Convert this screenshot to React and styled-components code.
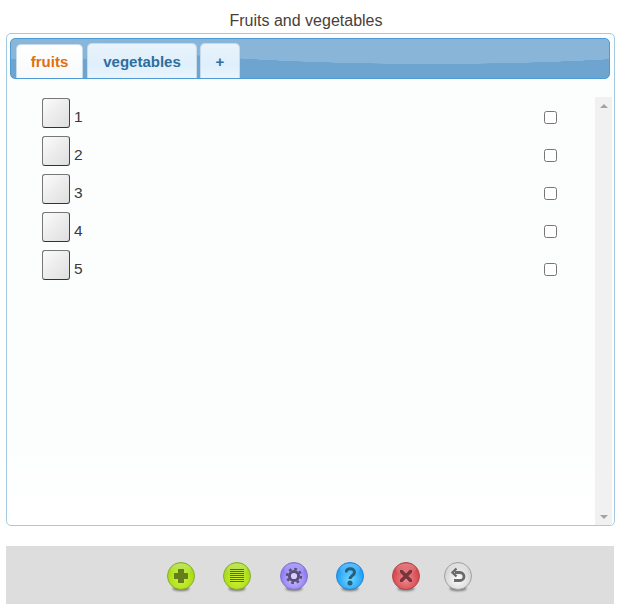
import styled, { createGlobalStyle } from "styled-components";

const GlobalStyle = createGlobalStyle`
  html, body {
    margin: 0;
    background: #fff;
    font-family: "Liberation Sans", Arial, sans-serif;
  }
`;

const Page = styled.div`
  width: 618px;
  height: 609px;
  padding: 12px 4px 0 6px;
  box-sizing: border-box;
  overflow: hidden;
`;

const Title = styled.div`
  height: 21px;
  line-height: 17px;
  font-size: 16px;
  color: #4a4038;
  text-align: center;
  padding-right: 8px;
`;

const Panel = styled.div`
  height: 493px;
  margin-right: -1px;
  box-sizing: border-box;
  border: 1px solid #a6c9e2;
  border-radius: 5px;
  padding: 4px 4px 0 3px;
  background: linear-gradient(#fcfdfd, #fcfefd 85%, #ffffff);
  display: flex;
  flex-direction: column;
`;

const TabBar = styled.div`
  height: 41px;
  box-sizing: border-box;
  border: 1px solid #4d9bd6;
  border-radius: 5px;
  background:
    linear-gradient(#89b6d9, #87b5d8) 0 0 / 100px 20px no-repeat,
    radial-gradient(ellipse 380px 40px at 420px -15px, #88b5d8 99.5%, #6da4d0 100%);
  display: flex;
  align-items: flex-end;
  padding-left: 5px;
`;

const Tab = styled.div`
  height: ${(p) => (p.$active ? 34 : 35)}px;
  width: ${(p) => p.$width}px;
  margin-right: ${(p) => p.$gap}px;
  box-sizing: border-box;
  border-radius: 5px 5px 0 0;
  border: 1px solid #c5dbec;
  border-bottom: 0;
  background: ${(p) =>
    p.$active ? "linear-gradient(#ffffff, #f7f9fa)" : "linear-gradient(#e9f3fb, #dfeffc 60%, #e9f4fd)"};
  color: ${(p) => (p.$active ? "#e17009" : "#2e6e9e")};
  font-size: 15px;
  font-weight: bold;
  display: flex;
  align-items: center;
  justify-content: center;
`;

const Body = styled.div`
  flex: 1;
  display: flex;
  padding-top: 18px;
  margin-right: -2px;
  min-height: 0;
`;

const List = styled.div`
  flex: 1;
  padding-left: 32px;
`;

const Row = styled.div`
  height: 38px;
  display: flex;
  align-items: flex-start;
`;

const ImageButton = styled.div`
  width: 28px;
  height: 30px;
  box-sizing: border-box;
  margin-top: 1px;
  border: 1px solid #777;
  border-right-color: #444;
  border-bottom-color: #333;
  border-radius: 3px;
  background: linear-gradient(135deg, #fbfbfb, #dedede);
`;

const Label = styled.span`
  margin: 11px 0 0 4px;
  font-size: 15.5px;
  line-height: 18px;
  color: #3a3a3a;
  flex: 1;
`;

const Check = styled.input.attrs({ type: "checkbox" })`
  appearance: none;
  width: 13px;
  height: 13px;
  margin: 14px 38px 0 0;
  box-sizing: border-box;
  border: 1px solid #767676;
  border-radius: 2.5px;
  background: #fff;
`;

const Scrollbar = styled.div`
  width: 17px;
  background: #f1f1f1;
  display: flex;
  flex-direction: column;
  justify-content: space-between;
  align-items: center;
  padding: 7px 0 6px;
  box-sizing: border-box;
`;

const Arrow = styled.div`
  width: 0;
  height: 0;
  border-left: 4px solid transparent;
  border-right: 4px solid transparent;
  ${(p) => (p.$down ? "border-top: 4px solid #a3a3a3;" : "border-bottom: 4px solid #a3a3a3;")}
`;

const Toolbar = styled.div`
  height: 58px;
  margin-top: 20px;
  background: #dddddd;
  display: flex;
  align-items: center;
  padding: 3px 0 0 160px;
  box-sizing: border-box;
`;

const IconSlot = styled.div`
  width: 30px;
  height: 32px;
  margin-right: ${(p) => p.$gap}px;
`;

const rows = ["1", "2", "3", "4", "5"];

const icons = [
  {
    id: "add", gap: 26, light: "#d6f232", mid: "#a8dc1c", dark: "#86ac2c",
    glyph: <path d="M12 8.500q0-.5.5-.5h5q.5 0 .5.5V12h3.500q.5 0 .5.5v5q0 .5-.5.5H18v3.500q0 .5-.5.5h-5q-.5 0-.5-.5V18H8.500q-.5 0-.5-.5v-5q0-.5.5-.5H12z" fill="#647f1a" />,
  },
  {
    id: "list", gap: 27, light: "#d6f232", mid: "#a8dc1c", dark: "#86ac2c",
    glyph: (
      <g stroke="#55700f" strokeWidth="1">
        {[8.5, 10.5, 12.5, 14.5, 16.5, 18.5, 20.5].map((y) => (
          <line key={y} x1="8" x2="22" y1={y} y2={y} />
        ))}
      </g>
    ),
  },
  {
    id: "gear", gap: 26, light: "#d0c6ff", mid: "#8e7cf4", dark: "#8478c8",
    glyph: (
      <g fill="none" stroke="#5a5078">
        <circle cx="15" cy="15" r="7" strokeWidth="2.4" strokeDasharray="2.75 2.75" />
        <circle cx="15" cy="15" r="4.6" strokeWidth="3" fill="#dccdff" />
      </g>
    ),
  },
  {
    id: "help", gap: 26, light: "#74d6ff", mid: "#22a2fa", dark: "#2a86d0",
    glyph: (
      <g fill="none" stroke="#20607c" strokeWidth="3">
        <path d="M11 11.500c0-5 8.500-5 8.500-.2 0 3.400-4.500 3.200-4.500 6.700" />
        <circle cx="15" cy="22" r="1" fill="#20607c" />
      </g>
    ),
  },
  {
    id: "close", gap: 22, light: "#f08a90", mid: "#d64a50", dark: "#b04a4e",
    glyph: <path d="M10 10l10 10M20 10l-10 10" stroke="#75363a" strokeWidth="3.400" strokeLinecap="round" />,
  },
  {
    id: "undo", gap: 0, light: "#ffffff", mid: "#d6d6d6", dark: "#a0a0a0",
    glyph: (
      <g fill="none" stroke="#6a6a6a" strokeWidth="2.800">
        <path d="M12 11.500h5a4 4 0 0 1 0 8h-6" />
        <path d="M13.500 7.500l-4 4 4 4" strokeWidth="2.400" />
      </g>
    ),
  },
];

const GlossIcon = ({ icon }) => (
  <svg width="30" height="32" viewBox="0 0 30 32">
    <defs>
      <radialGradient id={`fill-${icon.id}`} cx="50%" cy="62%" r="60%">
        <stop offset="0%" stopColor={icon.light} />
        <stop offset="80%" stopColor={icon.mid} />
        <stop offset="100%" stopColor={icon.mid} />
      </radialGradient>
      <linearGradient id={`shine-${icon.id}`} x1="0" x2="0" y1="0" y2="1">
        <stop offset="0%" stopColor="#fff" stopOpacity="0.3" />
        <stop offset="100%" stopColor="#fff" stopOpacity="0" />
      </linearGradient>
      <filter id={`blur-${icon.id}`} x="-30%" y="-30%" width="160%" height="160%">
        <feGaussianBlur stdDeviation="1.100" />
      </filter>
      <filter id={`soft-${icon.id}`} x="-10%" y="-10%" width="120%" height="120%">
        <feGaussianBlur stdDeviation="0.35" />
      </filter>
    </defs>
    <ellipse cx="15" cy="27.500" rx="8.500" ry="2.400" fill="#444" opacity="0.7" filter={`url(#blur-${icon.id})`} />
    <circle cx="15" cy="15" r="13.500" fill={`url(#fill-${icon.id})`} stroke={icon.dark} strokeWidth="1" />
    <ellipse cx="15" cy="8.500" rx="10" ry="6" fill={`url(#shine-${icon.id})`} />
    <g filter={`url(#soft-${icon.id})`}>{icon.glyph}</g>
  </svg>
);

const App = () => (
  <>
    <GlobalStyle />
    <Page>
      <Title>Fruits and vegetables</Title>
      <Panel>
        <TabBar>
          <Tab $active $width={67} $gap={4}>fruits</Tab>
          <Tab $width={110} $gap={3}>vegetables</Tab>
          <Tab $width={40} $gap={0}>+</Tab>
        </TabBar>
        <Body>
          <List>
            {rows.map((n) => (
              <Row key={n}>
                <ImageButton />
                <Label>{n}</Label>
                <Check readOnly />
              </Row>
            ))}
          </List>
          <Scrollbar>
            <Arrow />
            <Arrow $down />
          </Scrollbar>
        </Body>
      </Panel>
      <Toolbar>
        {icons.map((icon) => (
          <IconSlot key={icon.id} $gap={icon.gap}>
            <GlossIcon icon={icon} />
          </IconSlot>
        ))}
      </Toolbar>
    </Page>
  </>
);

export default App;
